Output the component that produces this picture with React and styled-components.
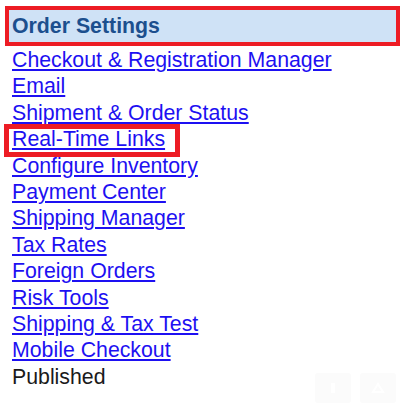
import React from 'react'
import styled, { createGlobalStyle } from 'styled-components'

const Global = createGlobalStyle`
  html, body {
    margin: 0;
    background: #fff;
    font-family: "Liberation Sans", Arial, sans-serif;
  }
`

const Page = styled.div`
  position: relative;
  width: 403px;
  height: 403px;
  overflow: hidden;
  padding: 6px 3px 0 5px;
  box-sizing: border-box;
`

const Heading = styled.div`
  height: 31px;
  border: 4px solid #ed1c24;
  background: #cfe2f6;
  color: #1c4f8e;
  font-size: 21.3px;
  font-weight: bold;
  line-height: 31px;
  padding: 1px 0 0 3px;
  box-sizing: content-box;
  margin-bottom: 1px;
`

const List = styled.div`
  display: flex;
  flex-direction: column;
  align-items: flex-start;
  padding-left: 7px;
`

const Item = styled.a`
  position: relative;
  display: block;
  font-size: 21.3px;
  line-height: 26.4px;
  color: #1d10f2;
  text-decoration: underline;

  &::after {
    content: '';
    display: ${p => (p.$marked ? 'block' : 'none')};
    position: absolute;
    left: -8px;
    right: -15px;
    top: -2px;
    bottom: -4px;
    border: 5px solid #ed1c24;
  }
`

const Plain = styled.div`
  font-size: 21.3px;
  line-height: 26.4px;
  color: #1a1a1a;
`

const Tools = styled.div`
  position: absolute;
  right: 7px;
  bottom: 0;
  display: flex;
  gap: 9px;
`

const ToolButton = styled.div`
  width: 36px;
  height: 30px;
  border-radius: 3px;
  background: #fbfbfb;
  display: flex;
  align-items: center;
  justify-content: center;
  color: #ffffff;
`

const links = [
  'Checkout & Registration Manager',
  'Email',
  'Shipment & Order Status',
  'Real-Time Links',
  'Configure Inventory',
  'Payment Center',
  'Shipping Manager',
  'Tax Rates',
  'Foreign Orders',
  'Risk Tools',
  'Shipping & Tax Test',
  'Mobile Checkout',
]

export default function App() {
  return (
    <Page>
      <Global />
      <Heading>Order Settings</Heading>
      <List>
        {links.map(l => (
          <Item key={l} href="#" $marked={l === 'Real-Time Links'}>{l}</Item>
        ))}
        <Plain>Published</Plain>
      </List>
      <Tools>
        <ToolButton>
          <svg width="12" height="14" viewBox="0 0 12 14">
            <rect x="4" y="2" width="4" height="10" fill="currentColor" />
          </svg>
        </ToolButton>
        <ToolButton>
          <svg width="16" height="14" viewBox="0 0 16 14">
            <path d="M3 11 L8 3 L13 11 Z" fill="none" stroke="currentColor" strokeWidth="2" />
          </svg>
        </ToolButton>
      </Tools>
    </Page>
  )
}
